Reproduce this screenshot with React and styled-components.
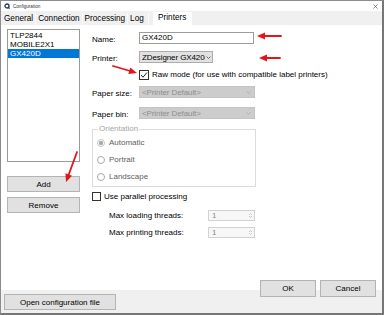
import React from 'react'
import styled, { createGlobalStyle } from 'styled-components'

const GlobalStyle = createGlobalStyle`
  html, body { margin: 0; padding: 0; background: #fff; }
  body {
    font-family: "Liberation Sans", Arial, sans-serif;
    font-size: 8px;
    color: #000;
  }
`

const printers = ['TLP2844', 'MOBILE2X1', 'GX420D']
const tabs = ['General', 'Connection', 'Processing', 'Log']

function Chevron({ color = '#555' }) {
  return (
    <svg width="5" height="3" viewBox="0 0 5 3">
      <polyline points="0.5,0.5 2.5,2.5 4.5,0.5" fill="none" stroke={color} strokeWidth="0.8" />
    </svg>
  )
}

function SpinArrows() {
  return (
    <SpinStack>
      <svg width="3" height="2" viewBox="0 0 3 2"><polyline points="0,2 1.5,0.5 3,2" fill="none" stroke="#aaa" strokeWidth="0.6" /></svg>
      <svg width="3" height="2" viewBox="0 0 3 2"><polyline points="0,0 1.5,1.5 3,0" fill="none" stroke="#aaa" strokeWidth="0.6" /></svg>
    </SpinStack>
  )
}

function Arrow({ x1, y1, x2, y2 }) {
  const dx = x2 - x1
  const dy = y2 - y1
  const len = Math.hypot(dx, dy)
  const ux = dx / len
  const uy = dy / len
  const bx = x2 - ux * 8
  const by = y2 - uy * 8
  const head = `${x2},${y2} ${bx - uy * 3.5},${by + ux * 3.5} ${bx + uy * 3.5},${by - ux * 3.5}`
  return (
    <g>
      <line x1={x1} y1={y1} x2={bx} y2={by} stroke="#e3151b" strokeWidth="1.8" strokeLinecap="round" />
      <polygon points={head} fill="#e3151b" />
    </g>
  )
}

function App() {
  return (
    <>
      <GlobalStyle />
      <Window>
        <TitleBar>
          <AppIcon viewBox="0 0 6 6">
            <circle cx="3" cy="3" r="2" fill="none" stroke="#1f3b5a" strokeWidth="1.3" />
            <line x1="4" y1="4" x2="5.6" y2="5.6" stroke="#1f3b5a" strokeWidth="1.2" />
          </AppIcon>
          <Title>Configuration</Title>
          <CloseIcon viewBox="0 0 5 5">
            <path d="M0.5 0.5 L4.5 4.5 M4.5 0.5 L0.5 4.5" stroke="#555" strokeWidth="0.7" />
          </CloseIcon>
        </TitleBar>

        <TabBar>
          {tabs.map(t => <Tab key={t}>{t}</Tab>)}
          <Tab active>Printers</Tab>
        </TabBar>

        <Body>
          <LeftCol>
            <List>
              {printers.map(p => (
                <ListItem key={p} selected={p === 'GX420D'}>{p}</ListItem>
              ))}
            </List>
            <Button top={14}>Add</Button>
            <Button top={5}>Remove</Button>
          </LeftCol>

          <RightCol>
            <Row h={12}>
              <Label>Name:</Label>
              <TextInput>GX420D</TextInput>
            </Row>
            <Row h={12} top={7}>
              <Label>Printer:</Label>
              <Combo>
                <ComboText>ZDesigner GX420d</ComboText>
                <Chevron />
              </Combo>
            </Row>
            <Row h={11} top={6} indent={47}>
              <CheckBox size={10}>
                <svg width="8" height="8" viewBox="0 0 8 8">
                  <polyline points="1,4 3,6.2 7,1.5" fill="none" stroke="#222" strokeWidth="1" />
                </svg>
              </CheckBox>
              <span>Raw mode (for use with compatible label printers)</span>
            </Row>
            <Row h={12} top={6}>
              <Label>Paper size:</Label>
              <Combo disabled wide>
                <ComboText>&lt;Printer Default&gt;</ComboText>
                <Chevron color="#a8a8a8" />
              </Combo>
            </Row>
            <Row h={12} top={9}>
              <Label>Paper bin:</Label>
              <Combo disabled wide>
                <ComboText>&lt;Printer Default&gt;</ComboText>
                <Chevron color="#a8a8a8" />
              </Combo>
            </Row>

            <Group>
              <Legend>Orientation</Legend>
              <RadioRow>
                <Radio checked />
                <RadioLabel>Automatic</RadioLabel>
              </RadioRow>
              <RadioRow>
                <Radio />
                <RadioLabel>Portrait</RadioLabel>
              </RadioRow>
              <RadioRow>
                <Radio />
                <RadioLabel>Landscape</RadioLabel>
              </RadioRow>
            </Group>

            <Row h={9} top={5}>
              <CheckBox size={9} />
              <span>Use parallel processing</span>
            </Row>
            <Row h={11} top={9} indent={17}>
              <ThreadLabel>Max loading threads:</ThreadLabel>
              <Spin>
                <span>1</span>
                <SpinArrows />
              </Spin>
            </Row>
            <Row h={11} top={6} indent={17}>
              <ThreadLabel>Max printing threads:</ThreadLabel>
              <Spin>
                <span>1</span>
                <SpinArrows />
              </Spin>
            </Row>
          </RightCol>
        </Body>

        <Footer>
          <OpenButton>Open configuration file</OpenButton>
          <DialogButtons>
            <Button w={56} h={17}>OK</Button>
            <Button w={56} h={17}>Cancel</Button>
          </DialogButtons>
        </Footer>

        <Annotations width="384" height="315" viewBox="0 0 384 315">
          <Arrow x1={281} y1={36} x2={257} y2={36} />
          <Arrow x1={280} y1={58} x2={259} y2={58} />
          <Arrow x1={113} y1={66} x2={137} y2={73} />
          <Arrow x1={77} y1={152} x2={66} y2={182} />
        </Annotations>
      </Window>
    </>
  )
}

export default App

const Window = styled.div`
  position: relative;
  width: 384px;
  height: 315px;
  box-sizing: border-box;
  border: 1px solid #8c8c8c;
  border-right: 2px solid #777;
  border-bottom: 2px solid #777;
  display: flex;
  flex-direction: column;
  background: #fff;
  overflow: hidden;
`

const TitleBar = styled.div`
  height: 10px;
  display: flex;
  align-items: center;
  padding: 0 4px 0 3px;
  background: #fff;
`

const AppIcon = styled.svg`
  width: 6px;
  height: 6px;
`

const Title = styled.span`
  font-size: 4.6px;
  color: #333;
  margin-left: 3px;
  flex: 1;
`

const CloseIcon = styled.svg`
  width: 5px;
  height: 5px;
`

const TabBar = styled.div`
  height: 14px;
  display: flex;
  align-items: flex-end;
  padding-left: 1px;
  background: #f0f0f0;
`

const Tab = styled.div`
  height: ${p => p.active ? 13 : 12}px;
  line-height: ${p => p.active ? 11 : 12}px;
  padding: 0 ${p => p.active ? 5 : 2}px;
  margin-left: ${p => p.active ? 4 : 0}px;
  min-width: ${p => p.children === 'Log' ? 16 : 0}px;
  background: ${p => p.active ? '#fff' : '#f0f0f0'};
  border-right: 1px solid ${p => p.active ? '#fff' : '#fbfbfb'};
  font-size: 8.2px;
  white-space: nowrap;
`

const Body = styled.div`
  flex: 1;
  display: flex;
  padding: 4px 0 0 6px;
`

const LeftCol = styled.div`
  width: 73px;
  display: flex;
  flex-direction: column;
`

const List = styled.div`
  height: 133px;
  box-sizing: border-box;
  border: 1px solid #9a9a9a;
  padding-top: 1px;
`

const ListItem = styled.div`
  height: 9px;
  line-height: 9px;
  padding-left: 2px;
  background: ${p => p.selected ? '#0078d7' : 'transparent'};
  color: ${p => p.selected ? '#fff' : '#000'};
`

const Button = styled.div`
  box-sizing: border-box;
  width: ${p => p.w ? `${p.w}px` : 'auto'};
  height: ${p => p.h || 16}px;
  margin-top: ${p => p.top || 0}px;
  display: flex;
  align-items: center;
  justify-content: center;
  background: #e1e1e1;
  border: 1px solid #b4b4b4;
`

const RightCol = styled.div`
  width: 165px;
  margin-left: 12px;
  padding-top: 3px;
  display: flex;
  flex-direction: column;
`

const Row = styled.div`
  display: flex;
  align-items: center;
  height: ${p => p.h}px;
  margin-top: ${p => p.top || 0}px;
  padding-left: ${p => p.indent || 0}px;
  white-space: nowrap;
`

const Label = styled.span`
  width: 47px;
  flex-shrink: 0;
  padding-top: 2px;
`

const TextInput = styled.div`
  box-sizing: border-box;
  width: 115px;
  height: 12px;
  line-height: 10px;
  padding-left: 2px;
  border: 1px solid #9c9c9c;
  background: #fff;
`

const Combo = styled.div`
  box-sizing: border-box;
  width: ${p => p.wide ? 116 : 74}px;
  height: 12px;
  display: flex;
  align-items: center;
  padding: 0 ${p => p.wide ? 3 : 1}px 0 2px;
  background: ${p => p.disabled ? '#cccccc' : '#e1e1e1'};
  border: 1px solid ${p => p.disabled ? '#c4c4c4' : '#adadad'};
  color: ${p => p.disabled ? '#8e8e8e' : '#000'};
`

const ComboText = styled.span`
  flex: 1;
  min-width: 0;
  overflow: hidden;
  letter-spacing: -0.1px;
  margin-right: 1px;
`

const CheckBox = styled.div`
  box-sizing: border-box;
  width: ${p => p.size}px;
  height: ${p => p.size}px;
  border: 1px solid #333;
  background: #fff;
  margin-right: 3px;
  display: flex;
  align-items: center;
  justify-content: center;
  flex-shrink: 0;
`

const Group = styled.fieldset`
  margin: 6px 0 0 0;
  padding: 1px 0 1px 4px;
  width: 164px;
  box-sizing: border-box;
  border: 1px solid #dcdcdc;
  min-inline-size: 0;
`

const Legend = styled.legend`
  padding: 0 1px;
  margin-left: 1px;
  line-height: 8px;
  color: #a5a5a5;
`

const RadioRow = styled.div`
  height: 17px;
  display: flex;
  align-items: center;
`

const Radio = styled.div`
  box-sizing: border-box;
  width: 8px;
  height: 8px;
  border-radius: 50%;
  border: 1px solid ${p => p.checked ? '#c6c6c6' : '#a8a8a8'};
  background: ${p => p.checked
    ? 'radial-gradient(circle, #a9a9a9 0 2px, #fff 2.3px)'
    : '#fff'};
  margin-right: 4px;
`

const RadioLabel = styled.span`
  color: #5e5e5e;
`

const ThreadLabel = styled.span`
  width: 99px;
  flex-shrink: 0;
`

const Spin = styled.div`
  box-sizing: border-box;
  width: 47px;
  height: 11px;
  display: flex;
  align-items: center;
  justify-content: space-between;
  padding: 0 2px 0 3px;
  border: 1px solid #d2d2d2;
  background: #f7f7f7;
  color: #8a8a8a;
`

const SpinStack = styled.div`
  display: flex;
  flex-direction: column;
  gap: 1px;
`

const Footer = styled.div`
  height: 35px;
  display: flex;
  justify-content: space-between;
  padding: 0 6px 0 3px;
  background: linear-gradient(to bottom, #fff 0, #fff 12px, #f0f0f0 12px);
`

const OpenButton = styled(Button)`
  width: 112px;
  align-self: flex-end;
  margin-bottom: 3px;
`

const DialogButtons = styled.div`
  display: flex;
  gap: 4px;
  align-self: flex-start;
  margin-top: 2px;
`

const Annotations = styled.svg`
  position: absolute;
  top: -1px;
  left: -1px;
  pointer-events: none;
`
